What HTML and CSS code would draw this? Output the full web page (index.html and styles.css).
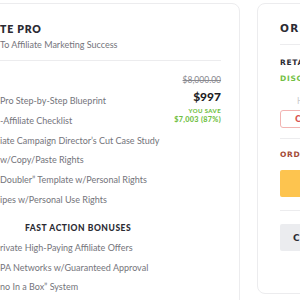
FILE: index.html
```html
<!DOCTYPE html>
<html lang="en">
<head>
    <meta charset="UTF-8">
    <meta name="viewport" content="width=device-width, initial-scale=1.0">
    <title>Checkout</title>
    <link rel="stylesheet" href="styles.css">
</head>
<body>
    <div class="checkout">
        <div class="cart">
            <div class="cart-head">
                <div class="cart-title">TE PRO</div>
                <div class="cart-subtitle">To Affiliate Marketing Success</div>
            </div>

            <div class="cart-body">
                <div class="price">
                    <div class="price-old">$8,000.00</div>
                    <div class="price-new">$997</div>
                    <div class="price-save">YOU SAVE</div>
                    <div class="price-save-amount">$7,003 (87%)</div>
                </div>

                <ul class="items">
                    <li>Pro Step-by-Step Blueprint</li>
                    <li>-Affiliate Checklist</li>
                    <li>iate Campaign Director&#8217;s Cut Case Study</li>
                    <li>w/Copy/Paste Rights</li>
                    <li>Doubler&#8221; Template w/Personal Rights</li>
                    <li>ipes w/Personal Use Rights</li>
                </ul>

                <div class="bonus-title">FAST ACTION BONUSES</div>
                <ul class="items">
                    <li>rivate High-Paying Affiliate Offers</li>
                    <li>PA Networks w/Guaranteed Approval</li>
                    <li>no In a Box&#8221; System</li>
                </ul>
            </div>
        </div>

        <div class="summary">
            <div class="summary-title">ORDER SUMMARY</div>

            <div class="summary-block">
                <div class="summary-label">RETAIL PRICE</div>
                <div class="summary-discount">DISCOUNT</div>
                <div class="coupon-hint">Have a coupon?</div>
                <button class="btn-coupon">COUPON</button>
            </div>

            <div class="summary-block">
                <div class="summary-total">ORDER TOTAL</div>
                <div class="total-bar"></div>
            </div>

            <div class="summary-block">
                <button class="btn-continue">CONTINUE</button>
            </div>
        </div>
    </div>
</body>
</html>
```

FILE: styles.css
```css
:root {
    --dark: #2b2b33;
    --gray: #74747b;
    --line: #ececee;
    --green: #72bf44;
    --red: #d9534f;
    --yellow: #fdc44f;
}

body {
    margin: 0;
    background-color: #ffffff;
    font-family: 'Lato', 'Open Sans', sans-serif;
    color: var(--gray);
    overflow: hidden;
}

.checkout {
    display: flex;
    gap: 17px;
    padding-top: 3px;
    margin-left: -200px;
}

/* Cart (left card) */
.cart {
    flex: none;
    width: 440px;
    height: 320px;
    box-sizing: border-box;
    padding: 0 18px 0 199px;
    background-color: #fff;
    border: 1px solid var(--line);
    border-radius: 8px;
}

.cart-head {
    padding: 17px 0 7px;
    border-bottom: 1px solid var(--line);
}

.cart-title {
    font-weight: 800;
    font-size: 10.5px;
    line-height: 16px;
    letter-spacing: 0.8px;
    color: var(--dark);
}

.cart-subtitle {
    font-size: 9px;
    line-height: 16px;
}

.cart-body {
    padding-top: 12px;
}

.price {
    float: right;
    text-align: right;
}

.price-old {
    font-size: 8.5px;
    line-height: 14px;
    color: #8a8a90;
    text-decoration: line-through;
}

.price-new {
    margin-top: 1px;
    font-weight: 900;
    font-size: 12px;
    line-height: 18px;
    color: #1f1f26;
}

.price-save {
    margin-top: 1px;
    font-weight: 900;
    font-size: 6px;
    line-height: 8px;
    letter-spacing: 0.4px;
    color: var(--green);
}

.price-save-amount {
    font-weight: 900;
    font-size: 7.3px;
    line-height: 9px;
    letter-spacing: 0.3px;
    color: var(--green);
}

.items {
    list-style: none;
    margin: 0;
    padding: 0;
}

.cart-body > .items:first-of-type {
    padding-top: 18px;
}

.items li {
    font-size: 9px;
    line-height: 19.8px;
}

.bonus-title {
    padding: 8px 0 0 25px;
    font-weight: 900;
    font-size: 8.5px;
    line-height: 20px;
    letter-spacing: 0.55px;
    color: var(--dark);
}

/* Order summary (right card) */
.summary {
    flex: none;
    width: 300px;
    height: 291px;
    box-sizing: border-box;
    padding: 0 22px;
    background-color: #fff;
    border: 1px solid var(--line);
    border-radius: 8px;
    font-family: 'DejaVu Sans', sans-serif;
}

.summary-title {
    padding: 16px 0 8px;
    font-weight: 700;
    font-size: 10.5px;
    line-height: 16px;
    letter-spacing: 1.3px;
    color: var(--dark);
}

.summary-block {
    border-top: 1px solid var(--line);
    padding-top: 13px;
    padding-bottom: 13px;
}

.summary-label,
.summary-discount,
.summary-total {
    font-weight: 700;
    font-size: 7.5px;
    line-height: 12px;
    letter-spacing: 0.7px;
    color: var(--dark);
}

.summary-discount {
    margin-top: 4px;
    color: var(--green);
}

.coupon-hint {
    margin-top: 11px;
    padding-left: 17px;
    font-size: 8px;
    line-height: 12px;
    color: #c8c8cc;
}

.btn-coupon {
    display: block;
    width: 100%;
    height: 18px;
    margin-top: 2px;
    padding: 0 0 0 14px;
    text-align: left;
    background-color: #fff;
    border: 1px solid #f2b3b1;
    border-radius: 3px;
    font-family: inherit;
    font-weight: 700;
    font-size: 8px;
    letter-spacing: 1px;
    color: var(--red);
}

.summary-block:nth-of-type(2) {
    padding-top: 12px;
    padding-bottom: 10px;
}

.summary-total {
    color: #a34a36;
}

.total-bar {
    height: 27px;
    margin-top: 9px;
    background-color: var(--yellow);
    border-radius: 2px;
}

.summary-block:nth-of-type(3) {
    padding-top: 10px;
}

.btn-continue {
    display: block;
    width: 100%;
    height: 27px;
    padding: 0 0 0 13px;
    text-align: left;
    background-color: #ebecef;
    border: none;
    border-radius: 2px;
    font-family: inherit;
    font-weight: 700;
    font-size: 9px;
    letter-spacing: 1px;
    color: var(--dark);
}
```
